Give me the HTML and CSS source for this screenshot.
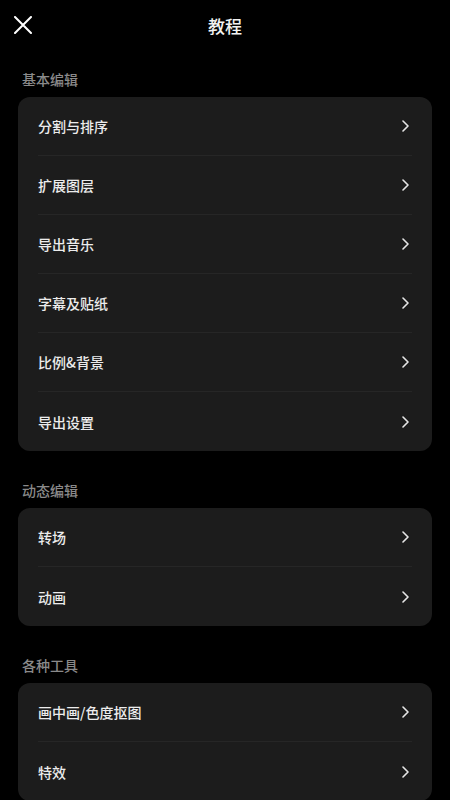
FILE: index.html
```html
<!DOCTYPE html>
<html lang="zh">
<head>
<meta charset="utf-8">
<link rel="stylesheet" href="styles.css">
</head>
<body>
<div class="page">
  <header class="header">
    <button class="close" aria-label="close">
      <svg width="18" height="18" viewBox="0 0 18 18"><path d="M1 1 L17 17 M17 1 L1 17" stroke="#fff" stroke-width="2" stroke-linecap="round" fill="none"/></svg>
    </button>
    <h1 class="title">教程</h1>
  </header>

  <section class="section">
    <div class="label">基本编辑</div>
    <div class="card">
      <div class="row"><span>分割与排序</span><svg class="chev" width="7" height="12" viewBox="0 0 7 12"><path d="M1 1 L6 6 L1 11" stroke="#e6e6e6" stroke-width="1.6" fill="none" stroke-linecap="round" stroke-linejoin="round"/></svg></div>
      <div class="row"><span>扩展图层</span><svg class="chev" width="7" height="12" viewBox="0 0 7 12"><path d="M1 1 L6 6 L1 11" stroke="#e6e6e6" stroke-width="1.6" fill="none" stroke-linecap="round" stroke-linejoin="round"/></svg></div>
      <div class="row"><span>导出音乐</span><svg class="chev" width="7" height="12" viewBox="0 0 7 12"><path d="M1 1 L6 6 L1 11" stroke="#e6e6e6" stroke-width="1.6" fill="none" stroke-linecap="round" stroke-linejoin="round"/></svg></div>
      <div class="row"><span>字幕及贴纸</span><svg class="chev" width="7" height="12" viewBox="0 0 7 12"><path d="M1 1 L6 6 L1 11" stroke="#e6e6e6" stroke-width="1.6" fill="none" stroke-linecap="round" stroke-linejoin="round"/></svg></div>
      <div class="row"><span>比例&amp;背景</span><svg class="chev" width="7" height="12" viewBox="0 0 7 12"><path d="M1 1 L6 6 L1 11" stroke="#e6e6e6" stroke-width="1.6" fill="none" stroke-linecap="round" stroke-linejoin="round"/></svg></div>
      <div class="row"><span>导出设置</span><svg class="chev" width="7" height="12" viewBox="0 0 7 12"><path d="M1 1 L6 6 L1 11" stroke="#e6e6e6" stroke-width="1.6" fill="none" stroke-linecap="round" stroke-linejoin="round"/></svg></div>
    </div>
  </section>

  <section class="section">
    <div class="label">动态编辑</div>
    <div class="card">
      <div class="row"><span>转场</span><svg class="chev" width="7" height="12" viewBox="0 0 7 12"><path d="M1 1 L6 6 L1 11" stroke="#e6e6e6" stroke-width="1.6" fill="none" stroke-linecap="round" stroke-linejoin="round"/></svg></div>
      <div class="row"><span>动画</span><svg class="chev" width="7" height="12" viewBox="0 0 7 12"><path d="M1 1 L6 6 L1 11" stroke="#e6e6e6" stroke-width="1.6" fill="none" stroke-linecap="round" stroke-linejoin="round"/></svg></div>
    </div>
  </section>

  <section class="section">
    <div class="label">各种工具</div>
    <div class="card">
      <div class="row"><span>画中画/色度抠图</span><svg class="chev" width="7" height="12" viewBox="0 0 7 12"><path d="M1 1 L6 6 L1 11" stroke="#e6e6e6" stroke-width="1.6" fill="none" stroke-linecap="round" stroke-linejoin="round"/></svg></div>
      <div class="row"><span>特效</span><svg class="chev" width="7" height="12" viewBox="0 0 7 12"><path d="M1 1 L6 6 L1 11" stroke="#e6e6e6" stroke-width="1.6" fill="none" stroke-linecap="round" stroke-linejoin="round"/></svg></div>
    </div>
  </section>
</div>
</body>
</html>
```

FILE: styles.css
```css
html, body {
  margin: 0;
  padding: 0;
  background: #000;
}
body {
  font-family: "Noto Sans CJK SC", "Noto Sans", sans-serif;
  color: #eeeeee;
  overflow: hidden;
}
.page {
  width: 450px;
  height: 800px;
  overflow: hidden;
  padding: 0 18px;
  box-sizing: border-box;
}
.header {
  position: relative;
  height: 52px;
  display: flex;
  align-items: center;
  justify-content: center;
}
.close {
  position: absolute;
  left: -4px;
  top: 16px;
  width: 18px;
  height: 18px;
  padding: 0;
  border: 0;
  background: none;
  display: flex;
}
.title {
  margin: 0;
  font-size: 17px;
  font-weight: 500;
  color: #f2f2f2;
  line-height: 24px;
}
.section {
  margin-bottom: 12px;
}
.label {
  padding: 17px 0 8px 4px;
  font-size: 14px;
  line-height: 20px;
  color: #8a8a8a;
  font-weight: 500;
}
.card {
  background: #1c1c1c;
  border-radius: 12px;
  padding: 0 20px;
}
.row {
  height: 59px;
  display: flex;
  align-items: center;
  justify-content: space-between;
  font-size: 14px;
  color: #ececec;
  font-weight: 500;
  border-bottom: 1px solid #262626;
  box-sizing: border-box;
}
.row:last-child {
  border-bottom: 0;
}
.chev {
  margin-right: 3px;
}
```
